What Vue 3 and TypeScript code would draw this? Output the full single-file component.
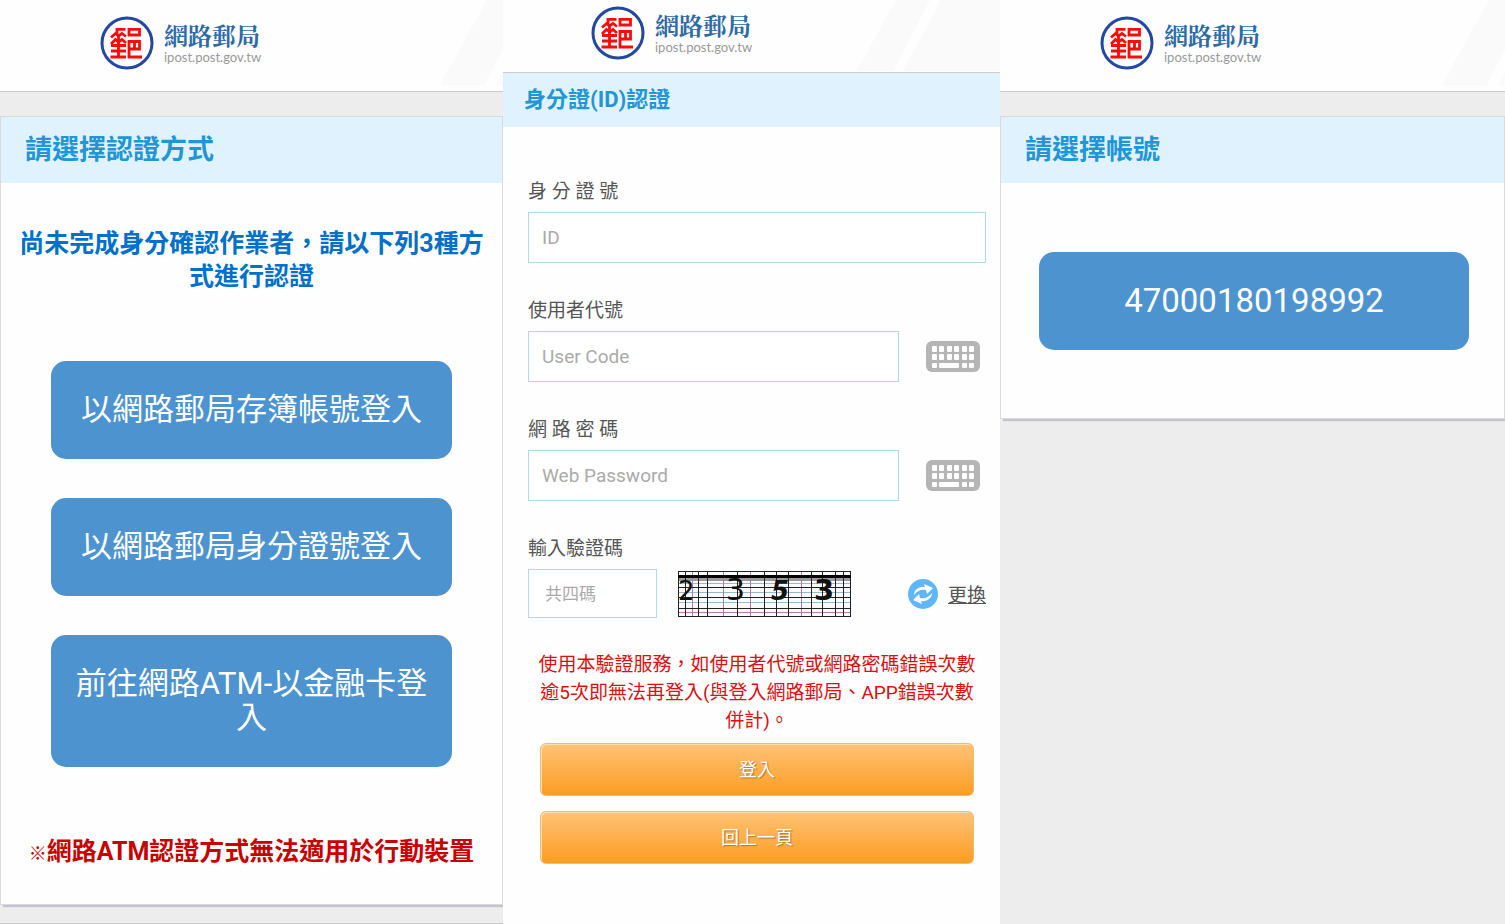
<script setup lang="ts">
import { reactive, ref } from 'vue'

interface CodeField {
  id: 'userCode' | 'webPassword'
  label: string
  placeholder: string
  type: string
}

const loginMethods: string[] = [
  '以網路郵局存簿帳號登入',
  '以網路郵局身分證號登入',
  '前往網路ATM-以金融卡登入',
]

const codeFields: CodeField[] = [
  { id: 'userCode', label: '使用者代號', placeholder: 'User Code', type: 'text' },
  { id: 'webPassword', label: '網 路 密 碼', placeholder: 'Web Password', type: 'password' },
]

const accounts: string[] = ['47000180198992']

const form = reactive({ idNumber: '', userCode: '', webPassword: '', captcha: '' })

const darkColumns: number[] = [7, 20, 29, 59, 86, 98, 110, 133, 144, 157, 165]
const purpleColumns: number[] = [14, 45, 72, 123]
const darkRows: number[] = [16, 26, 37]
const blueRows: number[] = [12, 21, 31]
const selected = ref('')
</script>

<template>
  <svg class="sprite" aria-hidden="true">
    <symbol id="emblem" viewBox="0 0 54 54">
      <circle cx="27" cy="27" r="25" fill="#fff" stroke="#2448a0" stroke-width="3" />
      <g fill="none" stroke="#fb0a0a" stroke-width="2.8">
        <path d="M17 18V13.400H25.500" />
        <path d="M11 21.500L15.500 17.500L18.500 20L22 17.500L26 20.500" />
        <path d="M11 28L15.500 23.500L18.500 26L22 23.500L26 27" />
        <path d="M18.500 20V41M11 29.500H26M11 35H26M10.500 41H26" />
        <path d="M29 13.400H39.500V19H29Z" />
        <path d="M42 41H29V25.500H39.500V33H29M34.500 25.500V33" />
      </g>
    </symbol>
    <symbol id="keyboard" viewBox="0 0 54 31">
      <rect width="54" height="31" rx="6" fill="#b5b5b5" />
      <g fill="#fff">
        <template v-for="y in [5, 13]" :key="y">
          <rect v-for="x in [6, 13, 21, 28, 36, 43]" :key="x" :x="x" :y="y" width="5" height="6" rx="1" />
        </template>
        <rect x="6" y="22" width="5" height="5" rx="1" />
        <rect x="13" y="22" width="20" height="5" rx="1" />
        <rect x="36" y="22" width="5" height="5" rx="1" />
        <rect x="43" y="22" width="5" height="5" rx="1" />
      </g>
    </symbol>
  </svg>

  <div class="screens">
    <section class="screen bordered">
      <header class="masthead">
        <svg class="emblem" aria-hidden="true"><use href="#emblem" /></svg>
        <div class="brand">
          <strong>網路郵局</strong>
          <span>ipost.post.gov.tw</span>
        </div>
        <svg class="stripes" width="64" height="85" aria-hidden="true">
          <path d="M1 85L48 0H64V49L45 85ZM57 85L64 72V85Z" fill="#fafafa" />
        </svg>
      </header>
      <main class="card">
        <h2>請選擇認證方式</h2>
        <p class="intro">尚未完成身分確認作業者，請以下列3種方式進行認證</p>
        <div class="choices">
          <button v-for="m in loginMethods" :key="m" type="button" class="choice" @click="selected = m">{{ m }}</button>
        </div>
        <p class="remark"><span class="mark">※</span>網路ATM認證方式無法適用於行動裝置</p>
      </main>
    </section>

    <section class="screen sheet">
      <header class="masthead compact">
        <svg class="emblem" aria-hidden="true"><use href="#emblem" /></svg>
        <div class="brand">
          <strong>網路郵局</strong>
          <span>ipost.post.gov.tw</span>
        </div>
        <svg class="stripes" width="143" height="71" aria-hidden="true">
          <path d="M0 71L39 0H73L36 71ZM46 71L84 0H143V71Z" fill="#fafafa" />
        </svg>
      </header>
      <h2 class="compact-title">身分證(ID)認證</h2>
      <form class="form" @submit.prevent>
        <div class="field">
          <label for="idNumber">身 分 證 號</label>
          <input id="idNumber" v-model="form.idNumber" type="text" placeholder="ID" />
        </div>
        <div v-for="f in codeFields" :key="f.id" class="field">
          <label :for="f.id">{{ f.label }}</label>
          <div class="row">
            <input :id="f.id" v-model="form[f.id]" :type="f.type" :placeholder="f.placeholder" />
            <button type="button" class="keyboard" aria-label="鍵盤">
              <svg width="54" height="31" aria-hidden="true"><use href="#keyboard" /></svg>
            </button>
          </div>
        </div>
        <div class="field">
          <label for="captcha">輸入驗證碼</label>
          <div class="row captcha-row">
            <input id="captcha" v-model="form.captcha" class="captcha-input" type="text" placeholder="共四碼" />
            <svg class="captcha" width="173" height="46" viewBox="0 0 173 46" role="img" aria-label="2353">
              <rect width="173" height="46" fill="#fbfbfd" />
              <rect y="7" width="173" height="3" fill="#999" />
              <g stroke="#93bccb">
                <line v-for="y in blueRows" :key="y" x1="0" x2="173" :y1="y + 0.5" :y2="y + 0.5" />
              </g>
              <g stroke="#b57aa8">
                <line v-for="x in purpleColumns" :key="x" :x1="x + 0.5" :x2="x + 0.5" y1="0" y2="46" />
                <line x1="0" x2="173" y1="41.5" y2="41.5" />
              </g>
              <g stroke="#222">
                <line v-for="x in darkColumns" :key="x" :x1="x + 0.5" :x2="x + 0.5" y1="0" y2="46" />
                <line v-for="y in darkRows" :key="y" x1="0" x2="173" :y1="y + 0.5" :y2="y + 0.5" />
                <rect x="0.5" y="0.5" width="172" height="45" fill="none" />
              </g>
              <rect y="4" width="173" height="3" fill="#000" />
              <g class="digits">
                <text x="0" y="29">2</text>
                <text x="48" y="29" class="large">3</text>
                <text x="93" y="29" class="slanted">5</text>
                <text x="136" y="29" class="heavy">3</text>
              </g>
            </svg>
            <a href="#" class="refresh" @click.prevent>
              <svg width="32" height="32" viewBox="0 0 32 32" aria-hidden="true">
                <circle cx="16" cy="16" r="15" fill="#5fb6fa" />
                <g v-for="turn in [0, 180]" :key="turn" :transform="`rotate(${turn} 16 16)`">
                  <path d="M7 17C7 12 12 8 18 9L17 6L26 10L20 16L19 12C14 11 10 13 7 17Z" fill="#fff" />
                </g>
              </svg>
              <span>更換</span>
            </a>
          </div>
        </div>
        <p class="warning">使用本驗證服務，如使用者代號或網路密碼錯誤次數逾5次即無法再登入(與登入網路郵局、APP錯誤次數併計)。</p>
        <div class="actions">
          <button type="submit">登入</button>
          <button type="button">回上一頁</button>
        </div>
      </form>
    </section>

    <section class="screen">
      <header class="masthead">
        <svg class="emblem" aria-hidden="true"><use href="#emblem" /></svg>
        <div class="brand">
          <strong>網路郵局</strong>
          <span>ipost.post.gov.tw</span>
        </div>
        <svg class="stripes" width="64" height="85" aria-hidden="true">
          <path d="M1 85L48 0H64V49L45 85ZM57 85L64 72V85Z" fill="#fafafa" />
        </svg>
      </header>
      <main class="card">
        <h2>請選擇帳號</h2>
        <div class="accounts">
          <button v-for="a in accounts" :key="a" type="button" class="choice account" @click="selected = a">{{ a }}</button>
        </div>
      </main>
    </section>
  </div>
</template>

<style>
body {
  margin: 0;
  background: #ededed;
}
</style>

<style scoped>
.sprite {
  position: absolute;
  width: 0;
  height: 0;
}

.screens {
  display: grid;
  grid-template-columns: 503fr 497fr 505fr;
  min-height: 100vh;
  font-family: Roboto, "Noto Sans CJK TC", sans-serif;
  background: #ededed;
}

.screens * {
  box-sizing: border-box;
}

.screen {
  min-width: 0;
}

.bordered {
  border-bottom: 1px solid #ccc;
}

.sheet {
  background: #fefefe;
}

.masthead {
  position: relative;
  display: flex;
  align-items: center;
  gap: 10px;
  height: 92px;
  padding: 0 0 6px 100px;
  background: #fefefe;
  border-bottom: 1px solid #ccc;
}

.compact {
  height: 73px;
  padding: 0 0 6px 88px;
}

.emblem {
  flex: none;
  width: 54px;
  height: 54px;
}

.stripes {
  position: absolute;
  top: 0;
  right: 0;
}

.brand {
  display: flex;
  flex-direction: column;
}

.brand strong {
  font-family: "Noto Serif CJK TC", "Noto Sans CJK TC", serif;
  font-size: 24px;
  line-height: 28px;
  color: #2f6aa5;
}

.brand span {
  font-family: Lato, sans-serif;
  font-size: 13px;
  line-height: 16px;
  color: #999;
}

.card {
  margin-top: 24px;
  background: #fefefe;
  border: 1px solid #dadada;
  box-shadow: 3px 2px 1px #c4c4d0;
}

h2 {
  margin: 0;
  padding: 0 24px;
  font-size: 27px;
  line-height: 66px;
  color: #2196d6;
  background: #e1f2ff;
}

.compact-title {
  padding: 0 21px;
  font-size: 22px;
  line-height: 54px;
}

.intro {
  margin: 44px 16px 68px;
  font-size: 25px;
  font-weight: 700;
  line-height: 33px;
  text-align: center;
  color: #0070c8;
}

.choices {
  display: flex;
  flex-direction: column;
  gap: 39px;
  margin: 0 50px;
}

.choice {
  width: 100%;
  padding: 32px 16px;
  font-family: inherit;
  font-size: 31px;
  line-height: 34px;
  color: #fff;
  background: #4c93cf;
  border: 0;
  border-radius: 15px;
}

.remark {
  margin: 68px 0 34px;
  font-size: 25px;
  font-weight: 700;
  line-height: 33px;
  text-align: center;
  color: #c80000;
}

.mark {
  font-size: 18px;
}

.accounts {
  padding: 69px 35px 68px 38px;
}

.account {
  font-size: 33px;
}

.form {
  display: flex;
  flex-direction: column;
  gap: 31px;
  padding: 48px 14px 0 25px;
}

.field {
  display: flex;
  flex-direction: column;
  gap: 4px;
}

label {
  font-size: 19px;
  line-height: 33px;
  color: #555;
}

.row {
  display: flex;
  align-items: center;
  gap: 27px;
}

input {
  flex: 1;
  width: 100%;
  min-width: 0;
  height: 51px;
  flex-basis: auto;
  padding: 0 13px;
  font-family: inherit;
  font-size: 19px;
  color: #555;
  background: #fff;
  border: 1px solid #b4d9ea;
  border-radius: 0;
}

input::placeholder {
  color: #aaa;
  opacity: 1;
}

.keyboard {
  display: flex;
  padding: 0;
  margin-right: 6px;
  background: none;
  border: 0;
}

.captcha-row {
  gap: 21px;
}

.captcha-input {
  flex: none;
  width: 129px;
  height: 49px;
  padding: 0 16px;
  font-size: 17px;
}

.digits {
  font-family: "DejaVu Sans", sans-serif;
  font-size: 26px;
  fill: #111;
}

.large {
  font-size: 30px;
}

.slanted {
  font-style: italic;
  font-weight: 700;
}

.heavy {
  font-weight: 700;
  font-size: 29px;
}

.refresh {
  display: flex;
  align-items: center;
  gap: 9px;
  margin-left: auto;
  font-size: 19px;
  color: #555;
  text-decoration: none;
}

.refresh span {
  text-decoration: underline;
}

.warning {
  margin: 2px 5px 0;
  font-size: 19px;
  line-height: 28px;
  text-align: center;
  color: #d81010;
}

.actions {
  display: flex;
  flex-direction: column;
  gap: 15px;
  margin: -23px 12px 0;
}

.actions button {
  height: 53px;
  padding: 0 0 4px;
  font-family: inherit;
  font-size: 18px;
  color: #fff;
  text-shadow: 1px 1px 1px #a87830;
  background: linear-gradient(#ffc276, #fc9d22);
  border: 1px solid #ecba70;
  border-radius: 6px;
  box-shadow: inset 1px 1px 0 #ffe0ae;
}
</style>
